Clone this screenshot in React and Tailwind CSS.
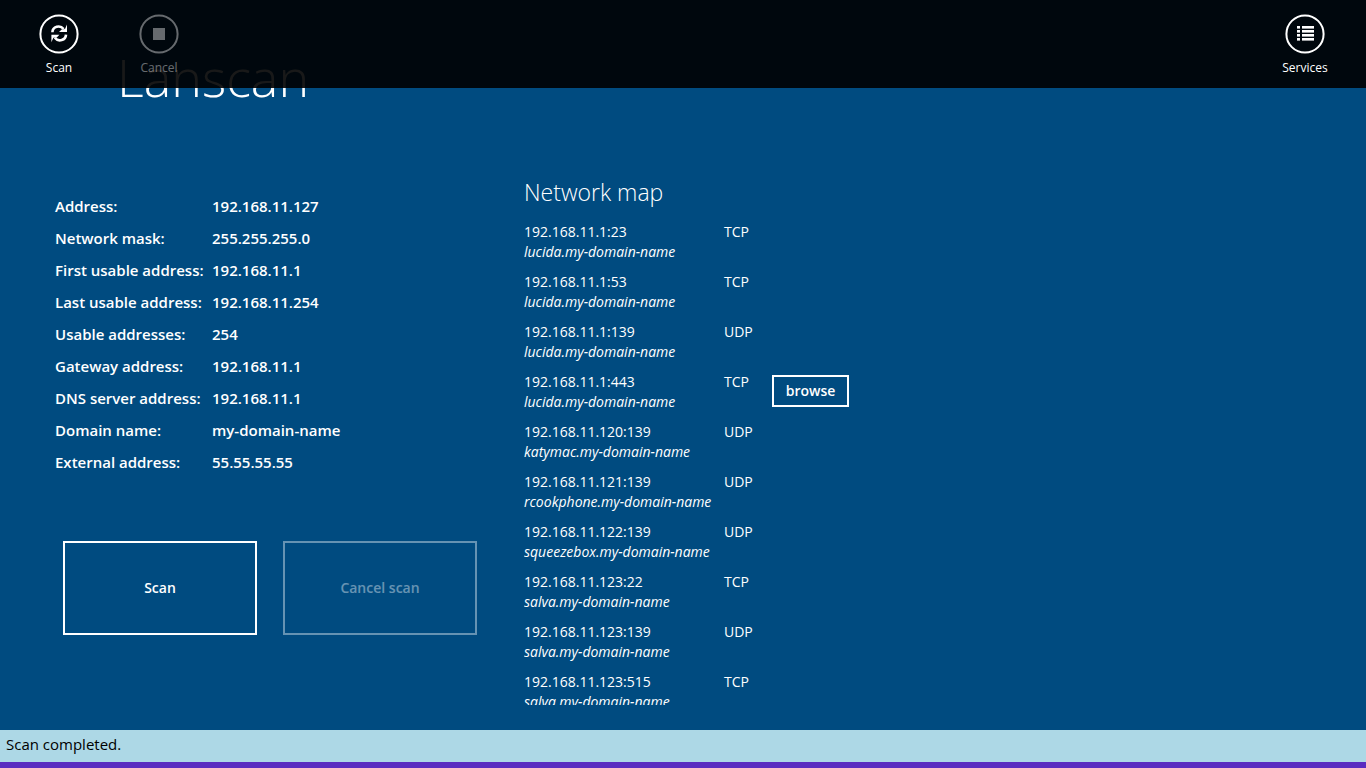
const details = [
  ["Address:", "192.168.11.127"],
  ["Network mask:", "255.255.255.0"],
  ["First usable address:", "192.168.11.1"],
  ["Last usable address:", "192.168.11.254"],
  ["Usable addresses:", "254"],
  ["Gateway address:", "192.168.11.1"],
  ["DNS server address:", "192.168.11.1"],
  ["Domain name:", "my-domain-name"],
  ["External address:", "55.55.55.55"],
];

const services = [
  { endpoint: "192.168.11.1:23", host: "lucida.my-domain-name", protocol: "TCP" },
  { endpoint: "192.168.11.1:53", host: "lucida.my-domain-name", protocol: "TCP" },
  { endpoint: "192.168.11.1:139", host: "lucida.my-domain-name", protocol: "UDP" },
  { endpoint: "192.168.11.1:443", host: "lucida.my-domain-name", protocol: "TCP", browse: true },
  { endpoint: "192.168.11.120:139", host: "katymac.my-domain-name", protocol: "UDP" },
  { endpoint: "192.168.11.121:139", host: "rcookphone.my-domain-name", protocol: "UDP" },
  { endpoint: "192.168.11.122:139", host: "squeezebox.my-domain-name", protocol: "UDP" },
  { endpoint: "192.168.11.123:22", host: "salva.my-domain-name", protocol: "TCP" },
  { endpoint: "192.168.11.123:139", host: "salva.my-domain-name", protocol: "UDP" },
  { endpoint: "192.168.11.123:515", host: "salva.my-domain-name", protocol: "TCP" },
];

function AppBarButton({ label, disabled, children }) {
  return (
    <button
      type="button"
      disabled={disabled}
      className="flex w-[100px] flex-col items-center gap-1.5 text-xs leading-4 text-white disabled:opacity-40"
    >
      <svg viewBox="0 0 40 40" className="size-10" fill="none" aria-hidden="true">
        <circle cx="20" cy="20" r="18.6" stroke="currentColor" strokeWidth="2" />
        {children}
      </svg>
      {label}
    </button>
  );
}

function SyncGlyph() {
  return (
    <g stroke="currentColor" strokeWidth="2.6">
      <path d="M13.4 18.2C13.6 12.6 21 10.4 24.6 15" />
      <path d="M28 10.600v7.400h-8l2.600-2.600 3.400-0.400z" fill="currentColor" stroke="none" />
      <path d="M27 20.600C26.800 26.200 19.400 28.400 15.800 23.800" />
      <path d="M12.400 28.200v-7.400h8l-2.600 2.600-3.400 0.400z" fill="currentColor" stroke="none" />
    </g>
  );
}

function ListGlyph() {
  return (
    <g fill="currentColor">
      {[12, 16, 20, 24].map((y) => (
        <g key={y}>
          <rect x="12" y={y} width="3" height="2.6" />
          <rect x="17" y={y} width="12" height="2.6" />
        </g>
      ))}
    </g>
  );
}

function AppBar() {
  return (
    <nav
      aria-label="Commands"
      className="absolute inset-x-0 top-0 flex h-[88px] items-start justify-between bg-black/90 pt-3.5 pr-[11px] pl-[9px]"
    >
      <div className="flex">
        <AppBarButton label="Scan">
          <SyncGlyph />
        </AppBarButton>
        <AppBarButton label="Cancel" disabled>
          <rect x="14" y="14" width="12" height="12" fill="currentColor" />
        </AppBarButton>
      </div>
      <AppBarButton label="Services">
        <ListGlyph />
      </AppBarButton>
    </nav>
  );
}

function NetworkDetails() {
  return (
    <section className="w-[524px] shrink-0 pt-[15px] pl-[55px]">
      <dl className="grid grid-cols-[157px_1fr] text-[15px] leading-8 font-semibold">
        {details.map(([name, value]) => (
          <div key={name} className="contents">
            <dt className="whitespace-nowrap">{name}</dt>
            <dd>{value}</dd>
          </div>
        ))}
      </dl>
      <div className="mt-[63px] ml-2 flex gap-[26px] text-sm font-semibold">
        <button type="button" className="h-[94px] w-[194px] shrink-0 border-2 border-white">
          Scan
        </button>
        <button
          type="button"
          disabled
          className="h-[94px] w-[194px] shrink-0 border-2 border-white disabled:opacity-40"
        >
          Cancel scan
        </button>
      </div>
    </section>
  );
}

function NetworkMap() {
  return (
    <section className="flex min-h-0 flex-1 flex-col">
      <h2 className="text-[23px] leading-[34px] font-light">Network map</h2>
      <ul className="mt-[13px] min-h-0 flex-1 overflow-hidden text-sm leading-5">
        {services.map((service) => (
          <li key={service.endpoint} className="flex h-[50px]">
            <div className="w-[200px] whitespace-nowrap">
              <div>{service.endpoint}</div>
              <div className="italic">{service.host}</div>
            </div>
            <div className="w-12">{service.protocol}</div>
            {service.browse && (
              <button
                type="button"
                className="mt-[3px] flex h-8 w-[77px] items-center justify-center border-2 border-white font-semibold"
              >
                browse
              </button>
            )}
          </li>
        ))}
      </ul>
    </section>
  );
}

export default function App() {
  return (
    <div className="relative flex h-screen flex-col overflow-hidden bg-[#004b80] font-['Open_Sans','Noto_Sans',sans-serif] text-white">
      <header className="h-[175px] shrink-0 pt-10 pl-[117px]">
        <h1 className="text-[52px] leading-[74px] font-light">Lanscan</h1>
      </header>
      <main className="flex min-h-0 flex-1 pb-[25px]">
        <NetworkDetails />
        <NetworkMap />
      </main>
      <footer className="shrink-0 border-b-6 border-[#5a2cc0] bg-[#add8e6] px-1.5 pb-1 text-[15px] leading-7 text-black">
        Scan completed.
      </footer>
      <AppBar />
    </div>
  );
}
